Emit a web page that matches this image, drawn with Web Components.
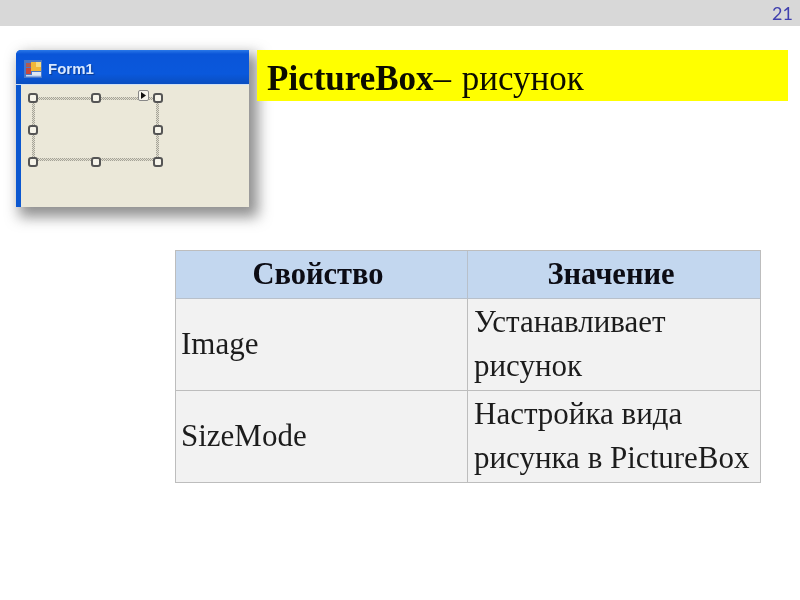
<!DOCTYPE html>
<html><head><meta charset="utf-8"><style>
html,body{margin:0;background:#fff}
body{width:800px;height:600px;overflow:hidden;font-family:"Liberation Serif",serif}
</style></head><body>
<slide-page>
<slide-bar slot="bar">21</slide-bar>
<form-window slot="form"></form-window>
<title-banner slot="banner"><b>PictureBox</b>– рисунок</title-banner>
<prop-table slot="table">
  <prop-head>Свойство</prop-head><prop-head>Значение</prop-head>
  <prop-cell>Image</prop-cell><prop-cell>Устанавливает<br>рисунок</prop-cell>
  <prop-cell>SizeMode</prop-cell><prop-cell>Настройка вида<br>рисунка в PictureBox</prop-cell>
</prop-table>
</slide-page>
<script>
function def(name,html){customElements.define(name,class extends HTMLElement{constructor(){super();this.attachShadow({mode:'open'}).innerHTML=html}})}
def('slide-page',`<style>
:host{display:flex;flex-direction:column;width:800px;height:600px}
.top{display:flex;align-items:flex-start;margin:24px 0 0 16px;gap:8px}
.tbl{margin:43px 0 0 175px}
</style><slot name="bar"></slot><div class="top"><slot name="form"></slot><slot name="banner"></slot></div><div class="tbl"><slot name="table"></slot></div>`);
def('slide-bar',`<style>
:host{display:flex;justify-content:flex-end;align-items:center;height:26px;background:#d8d8d8;padding-right:7px;box-sizing:border-box;font:18px/1 Lato,sans-serif;color:#3f3fae;filter:blur(.25px)}
</style><slot></slot>`);
def('title-banner',`<style>
:host{display:flex;align-items:center;white-space:pre;width:531px;height:51px;background:#ffff00;padding:5px 0 0 10px;box-sizing:border-box;font:35px/1 "Liberation Serif",serif;word-spacing:2px;color:#0c0c00;filter:blur(.3px)}
::slotted(b){font-weight:bold}
</style><span><slot></slot></span>`);
def('form-handle',`<style>
:host{position:absolute;width:6px;height:6px;border:2px solid #555;border-radius:3px;background:#f6f4ea;left:var(--x);top:var(--y);transform:translate(-50%,-50%)}
</style>`);
def('form-window',`<style>
:host{display:flex;flex-direction:column;width:233px;height:157px;position:relative;box-shadow:6px 7px 14px 3px rgba(70,70,70,.6);border-radius:5px 0 0 0;background:#0b57d0;filter:blur(.45px)}
.title{display:flex;align-items:center;gap:6px;height:34px;padding:3px 0 0 8px;box-sizing:border-box;background:linear-gradient(#2a78e8 0,#0a55d8 12%,#0a58dc 70%,#0a4ec0 100%);color:#d8e8ff;font:bold 15px/1 "Liberation Sans",sans-serif;border-radius:5px 0 0 0;text-shadow:1px 1px 1px #0a3a90}
.sep{height:1px;background:#cfe0f5}
.client{flex:1;background:#ebe8d9;margin-left:5px;position:relative}
.sel{position:absolute;left:11px;top:12px;width:127px;height:64px;border:3px solid transparent;box-sizing:border-box;background:repeating-conic-gradient(#a5a398 0 25%,#e2dfd0 0 50%) 0 0/2px 2px border-box}
.sel::before{content:"";position:absolute;inset:0;background:#ebe8d9}
.btn{position:absolute;left:117px;top:5px;width:11px;height:11px;border:1px solid #888;border-radius:2px;background:#f6f5ee;box-sizing:border-box;display:flex;align-items:center;justify-content:center}
svg{display:block}
</style>
<div class="title"><svg width="18" height="18" viewBox="0 0 18 18"><rect width="18" height="18" fill="#4a78c8"/><rect x="7" y="2" width="10" height="9" fill="#f2b838"/><rect x="12" y="2" width="5" height="5" fill="#f8dc80"/><rect x="2" y="3" width="5" height="4" fill="#b05a50"/><rect x="2" y="8" width="5" height="6" fill="#c8483c"/><rect x="8" y="12" width="9" height="3" fill="#dfe8f4"/><rect x="2" y="15" width="15" height="1.5" fill="#c8d8ee"/></svg>Form1</div>
<div class="sep"></div>
<div class="client">
 <div class="sel"></div>
 <form-handle style="--x:12px;--y:13px"></form-handle>
 <form-handle style="--x:75px;--y:13px"></form-handle>
 <form-handle style="--x:137px;--y:13px"></form-handle>
 <form-handle style="--x:12px;--y:45px"></form-handle>
 <form-handle style="--x:137px;--y:45px"></form-handle>
 <form-handle style="--x:12px;--y:77px"></form-handle>
 <form-handle style="--x:75px;--y:77px"></form-handle>
 <form-handle style="--x:137px;--y:77px"></form-handle>
 <div class="btn"><svg width="5" height="7" viewBox="0 0 5 7"><path d="M0 0L5 3.5L0 7Z" fill="#111"/></svg></div>
</div>`);
def('prop-table',`<style>
:host{display:grid;grid-template-columns:293px 293px;grid-template-rows:49px 92px 92px;width:586px;height:233px;background:#f2f2f2;box-sizing:border-box;outline:1px solid #bdbdbd;outline-offset:-1px;filter:blur(.3px)}
</style><slot></slot>`);
def('prop-head',`<style>
:host{display:flex;align-items:center;justify-content:center;background:#c3d7ef;border:1px solid #b8c0ca;border-width:1px 1px 1px 0;padding:0 6px 0 0;box-sizing:border-box;font:bold 30.5px/1 "Liberation Serif",serif;color:#0c0c14}
</style><slot></slot>`);
def('prop-cell',`<style>
:host{display:flex;align-items:center;padding:0 0 1px 6px;box-sizing:border-box;border:solid #bdbdbd;border-width:0 1px 1px 0;font:31px/44px "Liberation Serif",serif;color:#1c1c1c}
</style><div><slot></slot></div>`);
</script>
</body></html>
